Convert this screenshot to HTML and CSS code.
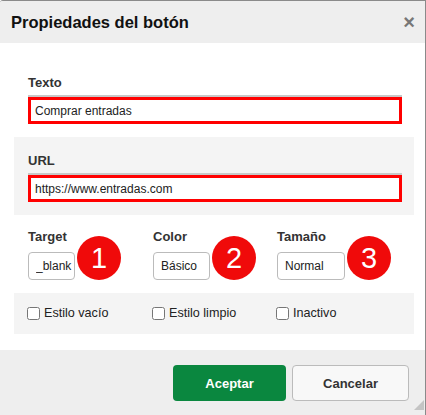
FILE: index.html
```html
<!DOCTYPE html>
<html lang="es">
<head>
  <meta charset="UTF-8">
  <title>Propiedades del botón</title>
  <link rel="stylesheet" href="styles.css">
</head>
<body>
  <div class="dialog">
    <div class="dialog-head">
      <h1>Propiedades del botón</h1>
      <span class="close">×</span>
    </div>

    <div class="dialog-body">
      <div class="section">
        <label class="field-label">Texto</label>
        <input class="text-input" type="text" value="Comprar entradas">
      </div>

      <div class="section alt">
        <label class="field-label">URL</label>
        <input class="text-input" type="text" value="https://www.entradas.com">
      </div>

      <div class="section cols">
        <div class="field">
          <label class="field-label">Target</label>
          <div class="field-line">
            <input class="small-input w-target" type="text" value="_blank">
            <span class="badge">1</span>
          </div>
        </div>
        <div class="field">
          <label class="field-label">Color</label>
          <div class="field-line">
            <input class="small-input w-color" type="text" value="Básico">
            <span class="badge">2</span>
          </div>
        </div>
        <div class="field">
          <label class="field-label">Tamaño</label>
          <div class="field-line">
            <input class="small-input w-size" type="text" value="Normal">
            <span class="badge">3</span>
          </div>
        </div>
      </div>

      <div class="section alt cols checks">
        <label class="check"><input type="checkbox"> Estilo vacío</label>
        <label class="check"><input type="checkbox"> Estilo limpio</label>
        <label class="check"><input type="checkbox"> Inactivo</label>
      </div>
    </div>

    <div class="dialog-foot">
      <button class="btn btn-ok">Aceptar</button>
      <button class="btn btn-cancel">Cancelar</button>
      <span class="grip"></span>
    </div>
  </div>
</body>
</html>
```

FILE: styles.css
```css
body {
  margin: 0;
  padding: 0;
  background: #fff;
  font-family: "Liberation Sans", Arial, sans-serif;
  color: #222;
}

.dialog {
  width: 425px;
  height: 414px;
  border-top: 1px solid #8a8a8a;
  border-right: 1px solid #8a8a8a;
  border-top-left-radius: 3px;
  background: #fff;
  overflow: hidden;
  display: flex;
  flex-direction: column;
}

.dialog-head {
  height: 42px;
  background: #eeeeee;
  display: flex;
  align-items: center;
  justify-content: space-between;
  padding: 0 10px 0 11px;
}

.dialog-head h1 {
  margin: 0;
  font-size: 16.5px;
  font-weight: bold;
  color: #111;
}

.close {
  font-size: 20px;
  font-weight: bold;
  color: #777;
  line-height: 20px;
}

.dialog-body {
  padding: 16px 11px 16px 14px;
}

.section {
  padding: 16px 12px 13px 14px;
}

.section.alt {
  background: #f4f4f4;
}

.field-label {
  display: block;
  font-size: 13px;
  line-height: 15px;
  font-weight: bold;
  color: #333;
  margin-bottom: 7px;
}

.text-input {
  display: block;
  box-sizing: border-box;
  width: 374px;
  height: 27px;
  margin-top: 2px;
  padding: 0 4px;
  border: 3px solid #f00;
  box-shadow: 0 -2px 0 #c8c8c8;
  background: #fff;
  font-family: inherit;
  font-size: 12px;
  color: #222;
  outline: none;
}

.cols {
  display: grid;
  grid-template-columns: 125px 124px 1fr;
}

.section.cols {
  padding-top: 14px;
}

.field-line {
  display: flex;
  align-items: flex-end;
  margin-top: 8px;
}

.small-input {
  box-sizing: border-box;
  height: 28px;
  padding: 0 2px 0 7px;
  border: 1px solid #bbb;
  border-radius: 4px;
  background: #fff;
  font-family: inherit;
  font-size: 12px;
  color: #222;
  outline: none;
}

.w-target { width: 47px; }
.w-color { width: 57px; }
.w-size { width: 68px; }

.badge {
  width: 44px;
  height: 44px;
  margin: -16px 0 0 2px;
  border-radius: 50%;
  background: #f00a0a;
  color: #fff;
  font-size: 29px;
  line-height: 44px;
  text-align: center;
  flex-shrink: 0;
}

.section.checks {
  padding: 13px 12px 13px 13px;
}

.check {
  display: flex;
  align-items: center;
  font-size: 12.6px;
  line-height: 15px;
  color: #222;
}

.check input {
  width: 13px;
  height: 13px;
  margin: 0 4px 0 0;
}

.dialog-foot {
  position: relative;
  flex: 1;
  background: #eeeeee;
  display: flex;
  justify-content: flex-end;
  align-items: flex-start;
  gap: 6px;
  padding: 15px 16px 0 0;
}

.btn {
  height: 36px;
  border-radius: 4px;
  font-family: inherit;
  font-size: 13px;
  font-weight: bold;
  cursor: pointer;
}

.btn-ok {
  width: 113px;
  border: none;
  background: #0a873f;
  color: #fff;
}

.btn-cancel {
  width: 117px;
  border: 1px solid #bbb;
  background: #f8f8f8;
  color: #333;
}

.grip {
  position: absolute;
  right: 1px;
  bottom: 5px;
  width: 0;
  height: 0;
  border-left: 10px solid transparent;
  border-bottom: 10px solid #c4c4c4;
}
```
